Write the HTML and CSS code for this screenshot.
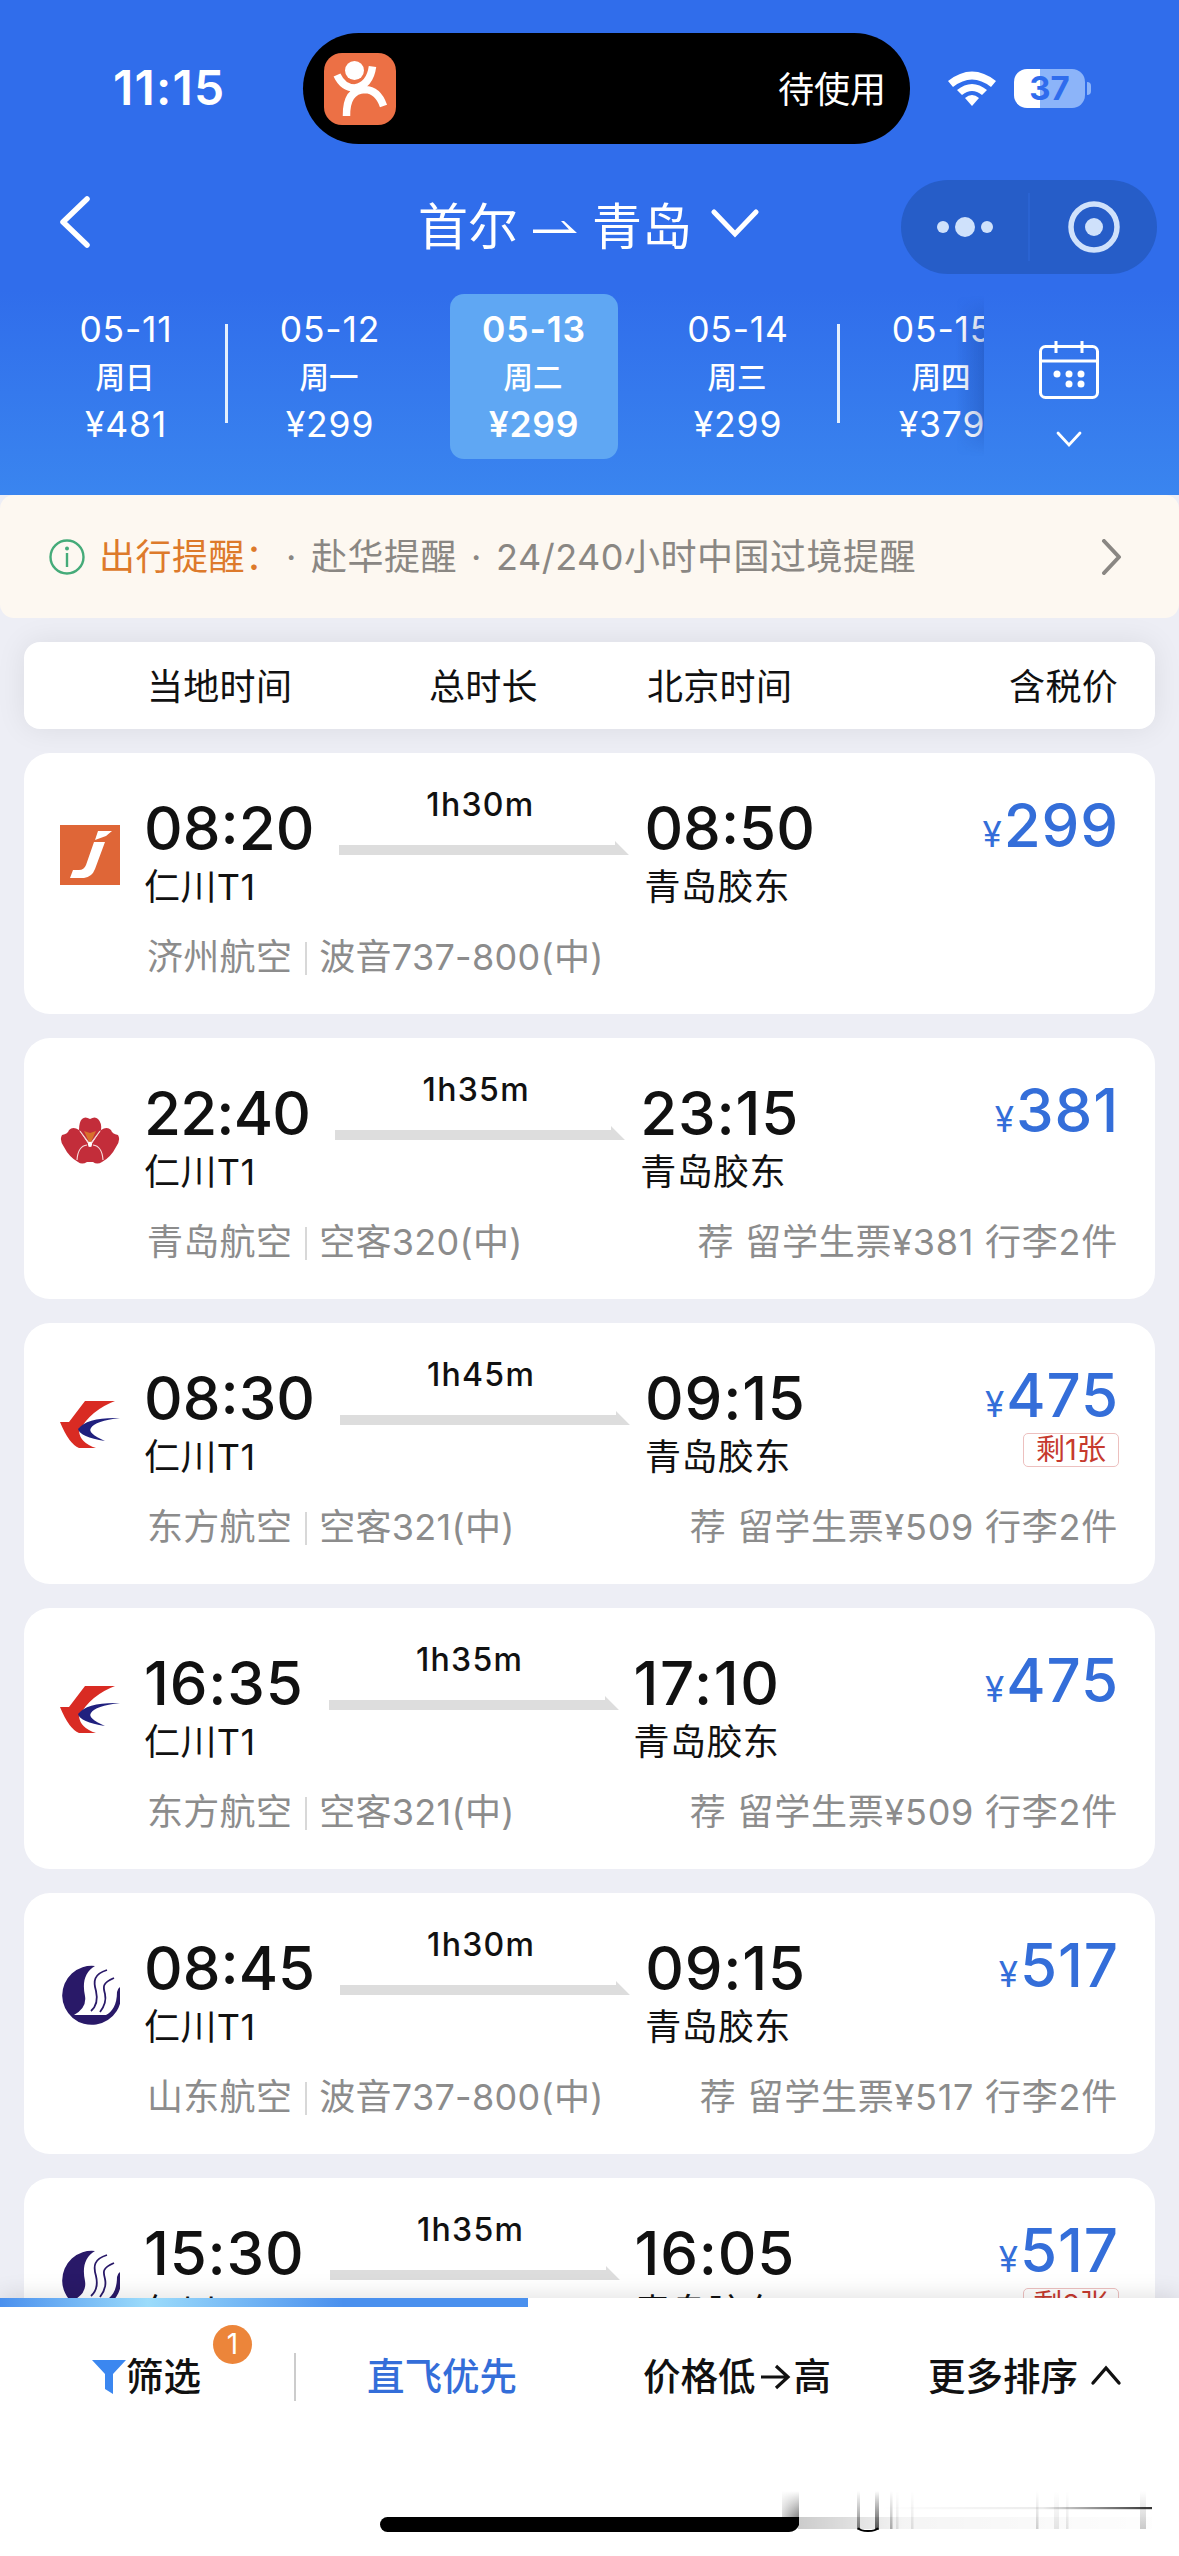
FILE: index.html
```html
<!DOCTYPE html>
<html lang="zh-CN">
<head>
<meta charset="utf-8">
<title>首尔 - 青岛 航班</title>
<link rel="stylesheet" href="styles.css">
</head>
<body>
<svg class="defs" aria-hidden="true">
  <symbol id="arrow" viewBox="0 0 290 14"><path d="M0 4H276V0L290 14H0Z" fill="#ddd"/></symbol>
  <symbol id="jeju" viewBox="0 0 60 60"><path fill="#df6637" d="M0 0H60V60H0Z"/><path fill="#fff" d="M38 6H52L46 11L35 15ZM34 17H45L35 44Q32 52 24 53H10L13 45H19Q24 45 26 40Z"/></symbol>
  <symbol id="qingdao" viewBox="0 0 60 60">
    <path fill="#c32d3a" d="M19 20Q19 12 22 9Q25 6 30 9Q35 6 38 9Q42 13 41 20L31 33H29Z"/>
    <path fill="#c32d3a" d="M29 35L19 20Q13 16 9 20Q8 24 2 25Q-1 30 4 37Q9 47 18 52ZM31 35L41 20Q47 16 51 20Q52 24 58 25Q61 30 56 37Q51 47 42 52Z"/>
    <path fill="#c32d3a" d="M18 52Q19 36 27 35Q30 39 33 35Q41 36 42 52Q37 55 33 52H27Q22 55 18 52Z"/>
    <path fill="#d8702c" d="M24 21L30 23L36 21L31 32H29Z"/>
    <path fill="none" stroke="#f6dcdc" stroke-width="1.100" d="M20 21L29 33M40 21L31 33M17 50Q18 36 27 35M43 50Q42 36 33 35"/>
    <circle cx="30" cy="34" r="2.200" fill="#fff"/>
  </symbol>
  <symbol id="eastern" viewBox="0 0 60 60">
    <path fill="#d92b23" d="M25 6H55Q31 15 19 36Q20 48 36 53H19Q9 49 0 27H9Z"/>
    <path fill="#20207e" d="M60 23Q27 22 18 34Q20 42 45 46Q27 38 31 33Q35 26 60 23Z"/>
  </symbol>
  <symbol id="shandong" viewBox="0 0 60 60">
    <path fill="#291968" d="M35 1A29.500 29.500 0 1 0 60 22Q58 23 57 27C57 40 52 47 46 50H14Q27 43 25 31C22 17 25 7 35 1Z"/>
    <path fill="none" stroke="#291968" stroke-width="1.800" d="M47 5C34 9 33 16 36 26Q39 39 31 46M54 13C42 18 43 22 45 29Q47 38 40 47"/>
  </symbol>
</svg>

<main class="screen">
  <header class="hero">
    <div class="status">
      <span class="clock">11:15</span>
      <div class="island">
        <svg width="72" height="72" viewBox="0 0 72 72"><rect width="72" height="72" rx="18" fill="#ec7045"/><circle cx="30.500" cy="17.500" r="9.500" fill="#fff"/><path d="M13 22Q19 35 31 35Q46 32 48.500 13.500M59.500 53Q54 37 41 36.500Q22 37 22.500 63" fill="none" stroke="#fff" stroke-width="7.500"/><path d="M24 35L42 31L44 37L30 42Z" fill="#fff"/></svg>
        <span>待使用</span>
      </div>
      <svg class="wifi" width="48" height="36" viewBox="0 0 48 36"><path d="M0 10Q24-9 48 10L43 16Q24 1 5 16ZM9 19Q24 7 39 19L34 24Q24 16 14 24ZM17 27Q24 21 31 27L24 35Z" fill="#fff"/></svg>
      <div class="battery"><span>37</span></div><i class="nub"></i>
    </div>

    <nav class="titlebar">
      <svg class="back" width="34" height="54" viewBox="0 0 34 54"><path d="M29 4L5 27L29 50" fill="none" stroke="#fff" stroke-width="5.500" stroke-linecap="round" stroke-linejoin="round"/></svg>
      <div class="title">
        <span>首尔</span>
        <svg width="44" height="12" viewBox="0 0 44 12"><path d="M0 8.500H36L28 0L31 0L44 12H0Z" fill="#fff"/></svg>
        <span>青岛</span>
        <svg width="48" height="30" viewBox="0 0 48 30"><path d="M3 3L24 25L45 3" fill="none" stroke="#fff" stroke-width="5" stroke-linecap="round"/></svg>
      </div>
      <svg class="capsule" width="256" height="94" viewBox="0 0 256 94"><rect width="256" height="94" rx="47" fill="#265dc8"/><path d="M128 13V81" stroke="#2a63d2" stroke-width="2"/><g fill="#cfe1fb"><circle cx="42" cy="47" r="6"/><circle cx="64" cy="47" r="10"/><circle cx="86" cy="47" r="6"/><circle cx="193" cy="47" r="9"/></g><circle cx="193" cy="47" r="23" fill="none" stroke="#cfe1fb" stroke-width="5.500"/></svg>
    </nav>

    <div class="dates">
      <div class="days">
        <div class="day ruled"><b>05-11</b><i>周日</i><b>¥481</b></div>
        <div class="day"><b>05-12</b><i>周一</i><b>¥299</b></div>
        <div class="day active"><b>05-13</b><i>周二</i><b>¥299</b></div>
        <div class="day ruled"><b>05-14</b><i>周三</i><b>¥299</b></div>
        <div class="day"><b>05-15</b><i>周四</i><b>¥379</b></div>
      </div>
      <div class="calendar">
        <svg width="60" height="60" viewBox="0 0 60 60"><g fill="none" stroke="#fff" stroke-width="3"><rect x="1.500" y="6.500" width="57" height="51" rx="5"/><path d="M2 21H58M17 1V13M43 1V13"/></g><g fill="#fff"><circle cx="18" cy="34" r="3.500"/><circle cx="30" cy="34" r="3.500"/><circle cx="42" cy="34" r="3.500"/><circle cx="30" cy="44" r="3.500"/><circle cx="42" cy="44" r="3.500"/></g></svg>
        <svg width="26" height="17" viewBox="0 0 26 17"><path d="M2 2L13 14L24 2" fill="none" stroke="#fff" stroke-width="2.800" stroke-linecap="round"/></svg>
      </div>
    </div>
  </header>

  <section class="notice">
    <svg width="36" height="36" viewBox="0 0 36 36"><g fill="none" stroke="#45ab79" stroke-width="2.400"><circle cx="18" cy="18" r="16.500"/><path d="M18 14V28"/></g><circle cx="18" cy="9.500" r="2" fill="#45ab79"/></svg>
    <strong>出行提醒：</strong>
    <span class="first"><i>·</i>赴华提醒</span><span class="second"><i>·</i>24/240小时中国过境提醒</span>
    <svg class="more" width="22" height="36" viewBox="0 0 22 36"><path d="M3 2L18 18L3 34" fill="none" stroke="#8a8783" stroke-width="4" stroke-linecap="round" stroke-linejoin="round"/></svg>
  </section>

  <div class="columns"><span>当地时间</span><span>总时长</span><span>北京时间</span><span>含税价</span></div>

  <section class="list">
    <article class="card">
      <svg class="logo"><use href="#jeju"/></svg>
      <div class="trip">
        <div class="stop"><time>08:20</time><span>仁川T1</span></div>
        <div class="route"><span>1h30m</span><svg><use href="#arrow"/></svg></div>
        <div class="stop"><time>08:50</time><span>青岛胶东</span></div>
        <div class="fare"><p><small>¥</small>299</p></div>
      </div>
      <div class="detail"><span>济州航空</span><span class="plane">波音737-800(中)</span></div>
    </article>
    <article class="card">
      <svg class="logo"><use href="#qingdao"/></svg>
      <div class="trip">
        <div class="stop"><time class="tight">22:40</time><span>仁川T1</span></div>
        <div class="route"><span>1h35m</span><svg><use href="#arrow"/></svg></div>
        <div class="stop"><time class="loose">23:15</time><span>青岛胶东</span></div>
        <div class="fare"><p><small>¥</small>381</p></div>
      </div>
      <div class="detail"><span>青岛航空</span><span class="plane">空客320(中)</span><span class="offer">荐 留学生票¥381 行李2件</span></div>
    </article>
    <article class="card">
      <svg class="logo"><use href="#eastern"/></svg>
      <div class="trip">
        <div class="stop"><time>08:30</time><span>仁川T1</span></div>
        <div class="route"><span>1h45m</span><svg><use href="#arrow"/></svg></div>
        <div class="stop"><time class="loose">09:15</time><span>青岛胶东</span></div>
        <div class="fare"><p><small>¥</small>475</p><em>剩1张</em></div>
      </div>
      <div class="detail"><span>东方航空</span><span class="plane">空客321(中)</span><span class="offer">荐 留学生票¥509 行李2件</span></div>
    </article>
    <article class="card">
      <svg class="logo"><use href="#eastern"/></svg>
      <div class="trip">
        <div class="stop"><time class="loose">16:35</time><span>仁川T1</span></div>
        <div class="route"><span>1h35m</span><svg><use href="#arrow"/></svg></div>
        <div class="stop"><time class="looser">17:10</time><span>青岛胶东</span></div>
        <div class="fare"><p><small>¥</small>475</p></div>
      </div>
      <div class="detail"><span>东方航空</span><span class="plane">空客321(中)</span><span class="offer">荐 留学生票¥509 行李2件</span></div>
    </article>
    <article class="card">
      <svg class="logo"><use href="#shandong"/></svg>
      <div class="trip">
        <div class="stop"><time>08:45</time><span>仁川T1</span></div>
        <div class="route"><span>1h30m</span><svg><use href="#arrow"/></svg></div>
        <div class="stop"><time class="loose">09:15</time><span>青岛胶东</span></div>
        <div class="fare"><p><small>¥</small>517</p></div>
      </div>
      <div class="detail"><span>山东航空</span><span class="plane">波音737-800(中)</span><span class="offer">荐 留学生票¥517 行李2件</span></div>
    </article>
    <article class="card">
      <svg class="logo"><use href="#shandong"/></svg>
      <div class="trip">
        <div class="stop"><time class="loose">15:30</time><span>仁川T1</span></div>
        <div class="route"><span>1h35m</span><svg><use href="#arrow"/></svg></div>
        <div class="stop"><time class="loose">16:05</time><span>青岛胶东</span></div>
        <div class="fare"><p><small>¥</small>517</p><em>剩2张</em></div>
      </div>
    </article>
  </section>

  <footer class="bar">
    <div class="progress"></div>
    <div class="tabs">
      <div class="tab filter"><svg width="34" height="34" viewBox="0 0 34 34"><path d="M0 0H34L21 14V34L13 29V14Z" fill="#3b87f0"/></svg><span>筛选</span><i>1</i></div>
      <div class="tab on">直飞优先</div>
      <div class="tab price">价格低<svg width="38" height="30" viewBox="0 0 38 30"><path d="M5 15H31M20 4L32 15L20 26" fill="none" stroke="#111" stroke-width="3.200"/></svg>高</div>
      <div class="tab sort">更多排序<svg width="32" height="22" viewBox="0 0 32 22"><path d="M3 19L16 4L29 19" fill="none" stroke="#111" stroke-width="3.400" stroke-linecap="round"/></svg></div>
    </div>
    <svg class="home" width="799" height="50" viewBox="0 0 799 50">
      <defs>
        <linearGradient id="down" x2="0" y2="1"><stop stop-opacity="0"/><stop offset="1" stop-opacity=".5"/></linearGradient>
        <linearGradient id="side"><stop stop-color="#fff" stop-opacity=".7"/><stop offset="1" stop-color="#fff" stop-opacity="0"/></linearGradient>
        <linearGradient id="fade"><stop stop-opacity=".34"/><stop offset=".3" stop-opacity=".07"/><stop offset="1" stop-opacity=".01"/></linearGradient>
        <linearGradient id="streak"><stop stop-opacity="0"/><stop offset=".6" stop-opacity=".08"/><stop offset="1" stop-opacity=".8"/></linearGradient>
      </defs>
      <rect x="402" y="6" width="17" height="27" fill="url(#down)"/>
      <rect x="402" y="6" width="17" height="26" fill="url(#side)"/>
      <rect x="418" y="32" width="354" height="12" fill="url(#fade)" opacity=".6"/>
      <path d="M7.500 32H419V40Q416 47 409 47H7.500A7.500 7.500 0 0 1 7.500 32Z"/>
      <g fill="url(#down)">
        <rect x="477" y="6" width="3" height="39"/><rect x="495" y="6" width="4" height="39"/><rect x="495" y="6" width="4" height="39" opacity=".6"/>
        <rect x="510" y="6" width="2.500" height="38" opacity=".6"/><rect x="516" y="6" width="2.500" height="38" opacity=".2"/><rect x="531" y="6" width="2.500" height="38" opacity=".2"/>
        <rect x="656" y="6" width="2.500" height="38" opacity=".35"/><rect x="674" y="6" width="5" height="38" opacity=".18"/><rect x="686" y="6" width="2.500" height="38" opacity=".2"/>
        <rect x="760" y="6" width="6" height="38" opacity=".4"/>
      </g>
      <path d="M478 43Q480 46 488 46Q496 46 498 43" fill="none" stroke="#000" stroke-width="2"/>
      <rect x="500" y="22" width="272" height="2.200" fill="url(#streak)"/>
    </svg>
  </footer>
</main>
</body>
</html>
```
FILE: styles.css
```css
* { box-sizing: border-box; }
body { margin: 0; font-family: Inter, "Noto Sans CJK SC", sans-serif; color: #111; background: #edeef5; }
p { margin: 0; }
i, em { font-style: normal; }
svg { display: block; flex: none; }
.defs { position: absolute; width: 0; height: 0; }
.screen { width: 1179px; height: 2556px; overflow: hidden; display: flex; flex-direction: column; }

.hero { height: 495px; flex: none; color: #fff; background: linear-gradient(#306deb 290px, #3a85ef 495px); }
.status { height: 144px; padding: 33px 0 0 113px; display: flex; align-items: center; }
.clock { width: 190px; font-size: 48px; font-weight: 600; letter-spacing: 1.2px; margin-top: -3px; }
.island { width: 607px; height: 111px; border-radius: 56px; background: #000; display: flex; align-items: center; justify-content: space-between; padding: 0 24px 0 21px; font-size: 36px; }
.island span { margin-top: -3px; }
.wifi { margin-left: 38px; }
.battery { margin-left: 18px; width: 71px; height: 39px; border-radius: 13px; background: linear-gradient(90deg, #fff 26px, #8cb4f9 26px); color: #2f6ced; font-size: 33px; font-weight: 700; line-height: 39px; text-align: center; }
.nub { width: 4px; height: 13px; margin-left: 2px; border-radius: 0 4px 4px 0; background: #8cb4f9; }

.titlebar { height: 146px; display: flex; align-items: center; padding: 20px 22px 0 58px; }
.back { margin-top: -11px; }
.title { width: 809px; padding-left: 326px; display: flex; align-items: center; font-size: 50px; line-height: 60px; font-weight: 400; }
.title svg:nth-of-type(1) { margin: 0 15px 0 15px; }
.title svg:nth-of-type(2) { margin: -6px 0 0 19px; }

.dates { display: flex; height: 173px; }
.days { width: 984px; padding: 4px 0 0 24px; display: flex; overflow: hidden; position: relative; }
.days::after { content: ""; position: absolute; right: 0; top: 6px; width: 28px; height: 160px; background: linear-gradient(90deg, transparent, rgba(20, 60, 150, .3)); -webkit-mask: linear-gradient(transparent, #000 25%, #000 75%, transparent); }
.day { flex: none; width: 168px; height: 165px; margin-right: 36px; position: relative; display: flex; flex-direction: column; align-items: center; padding-top: 12px; border-radius: 14px; }
.day:first-child { margin-left: 18px; }
.day b { height: 48px; line-height: 48px; font-weight: 400; font-size: 35.5px; letter-spacing: .8px; }
.day i { height: 47px; line-height: 46px; font-size: 29.5px; font-weight: 500; margin-right: 2px; }
.day.active { background: #5fa7f3; }
.day.active b { font-weight: 600; }
.day.ruled::after { content: ""; position: absolute; right: -18px; top: 30px; width: 3px; height: 99px; background: #e4effd; }
.calendar { flex: 1; padding: 50px 19px 0 0; display: flex; flex-direction: column; align-items: center; gap: 31px; }
.calendar svg { margin-left: -6px; }

.notice { height: 123px; flex: none; border-radius: 14px; background: #fdf8f1; display: flex; align-items: center; padding: 0 56px 0 49px; font-size: 36px; letter-spacing: .5px; line-height: 50px; color: #8a8783; }
.notice strong { width: 187px; margin-left: 14px; white-space: nowrap; font-weight: 400; color: #dd7a2b; }
.notice span i { display: inline-block; width: 25px; }
.notice .second { margin-left: 14px; }
.notice .more { margin-left: auto; }

.columns { flex: none; height: 87px; margin: 24px 24px 24px; padding: 0 37px 3px 123px; border-radius: 16px; background: #fff; box-shadow: 0 0 30px rgba(0, 0, 0, .08); display: grid; grid-template-columns: 282px 218px 200px 1fr; align-items: center; font-size: 36px; letter-spacing: .3px; }
.columns span:last-child { text-align: right; }

.list { height: 1545px; flex: none; overflow: hidden; display: flex; flex-direction: column; gap: 24px; padding: 0 24px; }
.card { flex: none; position: relative; height: 261px; border-radius: 26px; background: #fff; padding: 40px 37px 0 120px; }
.logo { position: absolute; left: 36px; top: 72px; width: 60px; height: 60px; }
.trip { display: flex; height: 118px; }
.stop time { display: block; height: 70px; line-height: 70px; font-size: 60px; font-weight: 500; }
.stop time.tight { letter-spacing: -.8px; }
.stop time.loose { letter-spacing: .8px; }
.stop time.looser { letter-spacing: 1.6px; }
.stop span { display: block; height: 48px; line-height: 48px; font-size: 36px; letter-spacing: .4px; }
.stop:first-child { margin-right: 25px; }
.route { width: 290px; margin-right: 15px; margin-top: -9px; display: flex; flex-direction: column; align-items: center; }
.route span { height: 40px; line-height: 41px; font-size: 32px; font-weight: 450; letter-spacing: 1.3px; margin-right: 8px; }
.route svg { width: 290px; height: 14px; margin-top: 17px; }
.fare { margin-left: auto; display: flex; flex-direction: column; align-items: flex-end; color: #346ed9; }
.fare p { height: 64px; line-height: 64px; font-size: 60px; font-weight: 500; letter-spacing: .9px; margin-right: -1px; }
.fare small { font-size: 35px; font-weight: 400; letter-spacing: 2px; }
.fare em { height: 34px; margin-right: -1px; margin-top: 6px; width: 96px; border: 1px solid #edc0bf; border-radius: 5px; color: #c63a2e; font-size: 29px; line-height: 31px; text-align: center; }
.detail { display: flex; height: 48px; line-height: 48px; margin-top: 22px; padding-left: 3px; font-size: 36px; letter-spacing: .3px; color: #8c8c8c; }
.detail span { white-space: nowrap; }
.detail .plane { position: relative; margin-left: 27px; }
.detail .plane::before { content: ""; position: absolute; left: -14px; top: 9px; width: 2px; height: 33px; background: #d8d8d8; }
.detail .offer { margin-left: auto; letter-spacing: .75px; }

.bar { position: relative; height: 258px; flex: none; background: #fff; box-shadow: 0 0 24px rgba(0, 0, 0, .14); }
.progress { width: 528px; height: 9px; background: linear-gradient(90deg, #4a90ee, #9cdcfb 28%, #4a90ee 65%, #4a90ee); }
.tabs { display: grid; grid-template-columns: 296px 347px 285px 1fr; height: 140px; align-items: center; font-size: 37.5px; font-weight: 500; }
.tab { position: relative; display: flex; align-items: center; height: 48px; line-height: 48px; }
.tab.filter { padding-left: 92px; border-right: 2px solid #ccc; }
.tab.filter i { position: absolute; left: 213px; top: -28px; width: 39px; height: 39px; border-radius: 50%; background: #ec853a; color: #fff; font-size: 28px; line-height: 39px; font-weight: 400; text-align: center; }
.tab.on { padding-left: 71px; color: #346ed9; }
.tab.sort svg { margin-left: 12px; margin-top: -4px; }
.home { position: absolute; left: 380px; bottom: 21px; }
```
